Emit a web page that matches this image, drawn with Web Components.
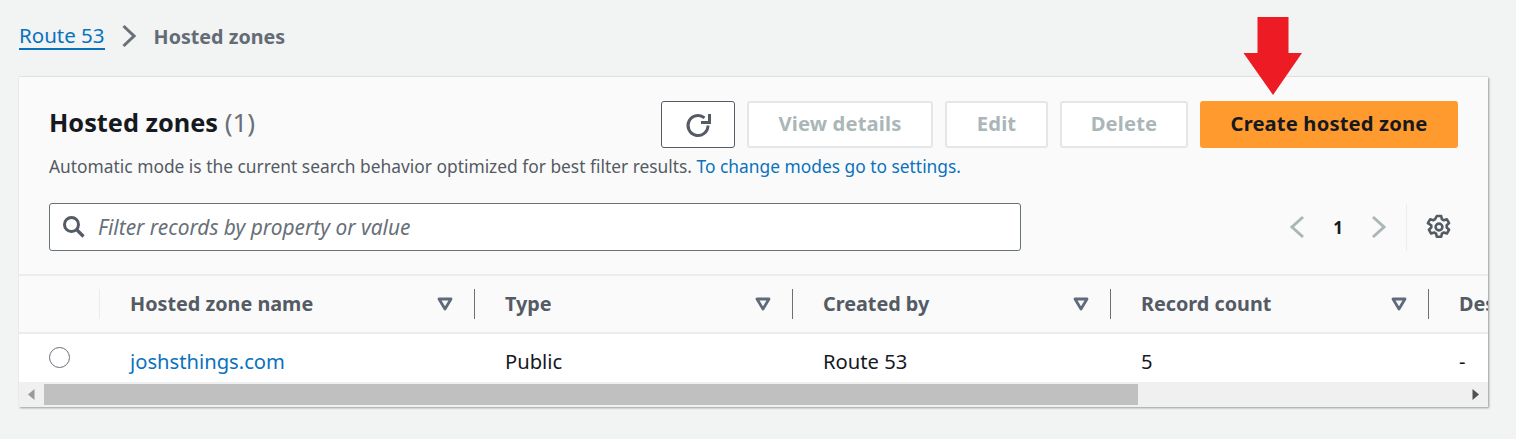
<!DOCTYPE html>
<html>
<head>
<meta charset="utf-8">
<title>Hosted zones</title>
<style>
  html, body { margin: 0; height: 100%; overflow: hidden; background: #f2f3f3; }
  body { font-family: "Noto Sans", "Open Sans", sans-serif; color: #16191f; }
</style>
</head>
<body>
<zones-page>
  <route-crumbs slot="crumbs"></route-crumbs>
  <zones-panel slot="panel"></zones-panel>
</zones-page>

<script>
class ZonesPage extends HTMLElement {
  connectedCallback() {
    const root = this.attachShadow({ mode: "open" });
    root.innerHTML = `
      <style>
        :host { display: block; position: relative; width: 1516px; height: 439px; box-sizing: border-box; padding: 0 28px 0 19px; }
        .arrow { position: absolute; left: 1243px; top: 17px; width: 60px; height: 78px; }
      </style>
      <slot name="crumbs"></slot>
      <slot name="panel"></slot>
      <svg class="arrow" viewBox="0 0 60 78"><path d="M14.500 0h31v36h13.500L30 78 0.500 36h14z" fill="#ed1c24"/></svg>
    `;
  }
}
customElements.define("zones-page", ZonesPage);

class RouteCrumbs extends HTMLElement {
  connectedCallback() {
    const root = this.attachShadow({ mode: "open" });
    root.innerHTML = `
      <style>
        :host { display: flex; align-items: center; height: 77px; box-sizing: border-box; padding-bottom: 5px; font-size: 20.5px; }
        a { color: #0972be; text-decoration: none; border-bottom: 2px solid #0972be; line-height: 26px; }
        svg { width: 16px; height: 24px; margin: 0 18px 0 15px; }
        b { color: #636b74; font-weight: 700; font-size: 19.7px; }
      </style>
      <a>Route 53</a>
      <svg viewBox="0 0 16 24"><path d="M3.500 2l10.500 10-10.500 10" fill="none" stroke="#687078" stroke-width="3"/></svg>
      <b>Hosted zones</b>
    `;
  }
}
customElements.define("route-crumbs", RouteCrumbs);

class AwsButton extends HTMLElement {
  connectedCallback() {
    const root = this.attachShadow({ mode: "open" });
    root.innerHTML = `
      <style>
        :host { display: flex; align-items: center; justify-content: center; box-sizing: border-box; height: 47px; padding-bottom: 3px; border-radius: 3px; border: 2px solid #e4e7e7; background: #fff; color: #abb6b8; font-weight: 700; font-size: 20.2px; letter-spacing: 0.15px; }
        :host([variant="icon"]) { border: 1.5px solid #545b64; padding-bottom: 0; }
        :host([variant="primary"]) { background: #ff9a2e; border-color: #ff9a2e; color: #16191f; }
      </style>
      <slot></slot>
    `;
    this.style.width = this.getAttribute("w") + "px";
  }
}
customElements.define("aws-button", AwsButton);

class ZonesPanel extends HTMLElement {
  connectedCallback() {
    const root = this.attachShadow({ mode: "open" });
    root.innerHTML = `
      <style>
        :host { display: block; background: #fafafa; box-shadow: 1px 1px 2px rgba(0,28,36,.4), 0 -1px 1px rgba(0,28,36,.05); height: 330px; overflow: hidden; }
        .head { box-sizing: border-box; height: 199px; padding: 24px 30px 0 30px; border-bottom: 2px solid #eaeded; }
        .top { display: flex; height: 47px; }
        h1 { margin: 0 auto 0 0; font-size: 25.3px; line-height: 43px; font-weight: 700; color: #16191f; }
        h1 span { font-weight: 400; font-size: 26px; color: #687078; }
        .note { margin: 6px 0 0; font-size: 17.37px; line-height: 25px; color: #545b64; white-space: nowrap; }
        .note a { color: #0972be; }
        .btns { display: flex; gap: 12px; }
        .bar { display: flex; align-items: center; margin-top: 24px; }
        .filter { box-sizing: border-box; width: 972px; height: 48px; padding-bottom: 1px; display: flex; align-items: center; gap: 13px; padding-left: 12px; background: #fff; border: 1.5px solid #687078; border-radius: 3px; font-style: italic; font-size: 20.9px; color: #687078; }
        .filter svg { width: 23px; height: 23px; }
        .pager { display: flex; align-items: center; margin-left: auto; height: 48px; }
        .pager svg.c { width: 16px; height: 24px; }
        .pager b { width: 66px; text-align: center; font-size: 17px; color: #16191f; }
        .sep { width: 1px; height: 47px; margin: 0 19px 0 19px; background: #eaeded; }
        .gear { width: 26px; height: 26px; margin-right: 6px; }
      </style>
      <div class="head">
        <div class="top">
          <h1>Hosted zones <span>(1)</span></h1>
          <div class="btns">
            <aws-button w="74" variant="icon">
              <svg width="28" height="28" viewBox="0 0 28 28"><path d="M24 14.500a10 10 0 1 1-3.500-7.600" fill="none" stroke="#545b64" stroke-width="3"/><path d="M17 11.500h8.500V3" fill="none" stroke="#545b64" stroke-width="3"/></svg>
            </aws-button>
            <aws-button w="186">View details</aws-button>
            <aws-button w="103">Edit</aws-button>
            <aws-button w="128">Delete</aws-button>
            <aws-button w="258" variant="primary">Create hosted zone</aws-button>
          </div>
        </div>
        <p class="note">Automatic mode is the current search behavior optimized for best filter results. <a>To change modes go to settings.</a></p>
        <div class="bar">
          <div class="filter">
            <svg viewBox="0 0 23 23"><circle cx="9.500" cy="9.500" r="7" fill="none" stroke="#545b64" stroke-width="3"/><path d="M14.500 14.500l7 7" stroke="#545b64" stroke-width="3.200"/></svg>
            <span>Filter records by property or value</span>
          </div>
          <div class="pager">
            <svg class="c" viewBox="0 0 16 24"><path d="M14 2L3 12l11 10" fill="none" stroke="#abb6b8" stroke-width="3"/></svg>
            <b>1</b>
            <svg class="c" viewBox="0 0 16 24"><path d="M2 2l11 10L2 22" fill="none" stroke="#abb6b8" stroke-width="3"/></svg>
            <div class="sep"></div>
            <svg class="gear" viewBox="0 0 26 26"><path d="M10.800 2h4.400l.7 3.200 1.900 1.100 3.100-1 2.200 3.800-2.400 2.200v2.200l2.400 2.200-2.200 3.800-3.100-1-1.900 1.100-.7 3.200h-4.400l-.7-3.200-1.900-1.100-3.100 1-2.200-3.800 2.400-2.200v-2.200L1.900 9.100l2.200-3.800 3.100 1 1.900-1.100z" fill="none" stroke="#545b64" stroke-width="2.600" stroke-linejoin="round"/><circle cx="13" cy="13" r="3.400" fill="none" stroke="#545b64" stroke-width="2.600"/></svg>
          </div>
        </div>
      </div>
      <zones-table></zones-table>
      <table-scroll></table-scroll>
    `;
  }
}
customElements.define("zones-panel", ZonesPanel);

class ZonesTable extends HTMLElement {
  connectedCallback() {
    const root = this.attachShadow({ mode: "open" });
    const cols = ["Hosted zone name", "Type", "Created by", "Record count"];
    const caret = `<svg viewBox="0 0 16 14"><path d="M2 2h12l-6 10z" fill="none" stroke="#5f6b7a" stroke-width="2.800" stroke-linejoin="round"/></svg>`;
    root.innerHTML = `
      <style>
        :host { display: block; height: 106px; overflow: hidden; }
        .row { display: grid; grid-template-columns: 81px 375px 318px 318px 318px 80px; }
        .th-row { height: 58px; background: #fafafa; border-bottom: 2px solid #eaeded; box-sizing: border-box; align-items: center; }
        .td-row { height: 48px; background: #fff; align-items: center; font-size: 20.2px; color: #16191f; }
        .th { display: flex; align-items: center; height: 30px; box-sizing: border-box; padding: 0 21px 0 30px; border-right: 1px solid #687078; font-size: 19.8px; font-weight: 700; color: #545b64; white-space: nowrap; }
        .th span { margin-right: auto; position: relative; top: -1px; }
        .th svg { width: 16px; height: 14px; flex: none; }
        .first { height: 30px; border-right: 1px solid #eaeded; }
        .last { border-right: 0; overflow: hidden; padding-right: 0; }
        .td { padding-left: 30px; white-space: nowrap; padding-top: 6px; }
        .td.radio { padding: 0 0 1px 30px; }
        .radio i { display: block; box-sizing: border-box; width: 21px; height: 21px; border: 1.5px solid #687078; border-radius: 50%; }
        a { color: #0972be; }
      </style>
      <div class="row th-row">
        <div class="first"></div>
        ${cols.map(c => `<div class="th"><span>${c}</span>${caret}</div>`).join("")}
        <div class="th last"><span>Description</span></div>
      </div>
      <div class="row td-row">
        <div class="td radio"><i></i></div>
        <div class="td"><a>joshsthings.com</a></div>
        <div class="td">Public</div>
        <div class="td">Route 53</div>
        <div class="td">5</div>
        <div class="td">-</div>
      </div>
    `;
  }
}
customElements.define("zones-table", ZonesTable);

class TableScroll extends HTMLElement {
  connectedCallback() {
    const root = this.attachShadow({ mode: "open" });
    root.innerHTML = `
      <style>
        :host { display: flex; align-items: center; height: 25px; background: #f0f0f0; }
        .arrow { width: 25px; display: flex; justify-content: center; }
        .track { flex: 1; height: 21px; }
        .thumb { width: 1094px; height: 100%; background: #c0c0c0; }
        svg { width: 7px; height: 11px; }
      </style>
      <div class="arrow"><svg viewBox="0 0 7 11"><path d="M6.500 0v11L0 5.500z" fill="#999"/></svg></div>
      <div class="track"><div class="thumb"></div></div>
      <div class="arrow"><svg viewBox="0 0 7 11"><path d="M.5 0v11L7 5.500z" fill="#505050"/></svg></div>
    `;
  }
}
customElements.define("table-scroll", TableScroll);
</script>
</body>
</html>
